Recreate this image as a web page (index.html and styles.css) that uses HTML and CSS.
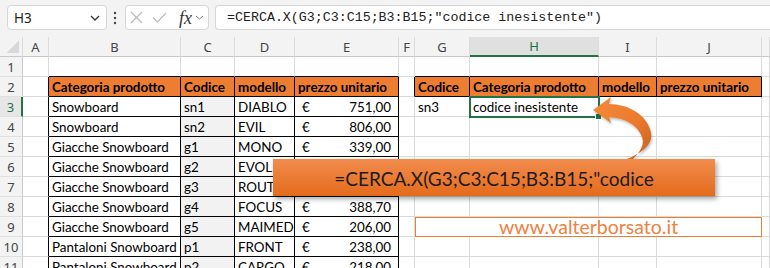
FILE: index.html
```html
<!DOCTYPE html>
<html lang="it">
<head>
  <meta charset="UTF-8">
  <title>CERCA.X - codice inesistente</title>
  <link rel="stylesheet" href="styles.css">
</head>
<body>
  <div class="bar">
    <div class="namebox">
      <span>H3</span>
      <svg width="10" height="6" viewBox="0 0 10 6"><path d="M1 1l4 4 4-4" fill="none" stroke="#333" stroke-width="1.3"/></svg>
    </div>
    <svg class="dots" width="4" height="14" viewBox="0 0 4 14"><circle cx="2" cy="2" r="1.2"/><circle cx="2" cy="7" r="1.2"/><circle cx="2" cy="12" r="1.2"/></svg>
    <div class="fxbox">
      <svg width="13" height="13" viewBox="0 0 13 13"><path d="M1 1l11 11M12 1L1 12" stroke="#b9b9b9" stroke-width="1.1"/></svg>
      <svg width="15" height="11" viewBox="0 0 15 11"><path d="M1 5.5l4.5 4.5L14 1" fill="none" stroke="#b9b9b9" stroke-width="1.1"/></svg>
      <span class="fx">fx</span>
      <svg width="9" height="5" viewBox="0 0 9 5"><path d="M1 1l3.5 3 3.5-3" fill="none" stroke="#888" stroke-width="1"/></svg>
    </div>
    <div class="formula">=CERCA.X(G3;C3:C15;B3:B15;"codice inesistente")</div>
  </div>

  <div class="sheet">
    <table class="grid">
      <colgroup>
        <col class="w-rn"><col class="w-a"><col class="w-b"><col class="w-c"><col class="w-d"><col class="w-e">
        <col class="w-f"><col class="w-g"><col class="w-h"><col class="w-i"><col class="w-j"><col class="w-k">
      </colgroup>
      <tr class="colhead">
        <th class="corner"><div class="tri"></div></th>
        <th>A</th><th>B</th><th>C</th><th>D</th><th>E</th><th>F</th><th>G</th><th class="on">H</th><th>I</th><th>J</th><th></th>
      </tr>
      <tr>
        <td class="rn">1</td><td></td><td class="kb"></td><td class="kb"></td><td class="kb"></td><td class="kb"></td>
        <td></td><td class="kb"></td><td class="kb"></td><td class="kb"></td><td class="kb"></td><td></td>
      </tr>
      <tr>
        <td class="rn">2</td><td class="kr"></td>
        <td class="k hd">Categoria prodotto</td><td class="k hd">Codice</td><td class="k hd">modello</td><td class="k hd">prezzo unitario</td>
        <td class="kr"></td>
        <td class="k hd">Codice</td><td class="k hd">Categoria prodotto</td><td class="k hd">modello</td><td class="k hd">prezzo unitario</td><td></td>
      </tr>
      <tr>
        <td class="rn on">3</td><td class="kr"></td>
        <td class="k">Snowboard</td><td class="k c">sn1</td><td class="k">DIABLO</td>
        <td class="k"><div class="money"><span>€</span><span>751,00</span></div></td>
        <td></td><td>sn3</td><td class="sel">codice inesistente</td><td></td><td></td><td></td>
      </tr>
      <tr>
        <td class="rn">4</td><td class="kr"></td>
        <td class="k">Snowboard</td><td class="k c">sn2</td><td class="k">EVIL</td>
        <td class="k"><div class="money"><span>€</span><span>806,00</span></div></td>
        <td></td><td></td><td></td><td></td><td></td><td></td>
      </tr>
      <tr>
        <td class="rn">5</td><td class="kr"></td>
        <td class="k">Giacche Snowboard</td><td class="k c">g1</td><td class="k">MONO</td>
        <td class="k"><div class="money"><span>€</span><span>339,00</span></div></td>
        <td></td><td></td><td></td><td></td><td></td><td></td>
      </tr>
      <tr>
        <td class="rn">6</td><td class="kr"></td>
        <td class="k">Giacche Snowboard</td><td class="k c">g2</td><td class="k">EVOL</td>
        <td class="k"><div class="money"><span>€</span><span>299,00</span></div></td>
        <td></td><td></td><td></td><td></td><td></td><td></td>
      </tr>
      <tr>
        <td class="rn">7</td><td class="kr"></td>
        <td class="k">Giacche Snowboard</td><td class="k c">g3</td><td class="k">ROUTE</td>
        <td class="k"><div class="money"><span>€</span><span>312,00</span></div></td>
        <td></td><td></td><td></td><td></td><td></td><td></td>
      </tr>
      <tr>
        <td class="rn">8</td><td class="kr"></td>
        <td class="k">Giacche Snowboard</td><td class="k c">g4</td><td class="k">FOCUS</td>
        <td class="k"><div class="money"><span>€</span><span>388,70</span></div></td>
        <td></td><td></td><td></td><td></td><td></td><td></td>
      </tr>
      <tr>
        <td class="rn">9</td><td class="kr"></td>
        <td class="k">Giacche Snowboard</td><td class="k c">g5</td><td class="k">MAIMED</td>
        <td class="k"><div class="money"><span>€</span><span>206,00</span></div></td>
        <td></td><td class="site" colspan="4">www.valterborsato.it</td><td></td>
      </tr>
      <tr>
        <td class="rn">10</td><td class="kr"></td>
        <td class="k">Pantaloni Snowboard</td><td class="k c">p1</td><td class="k">FRONT</td>
        <td class="k"><div class="money"><span>€</span><span>238,00</span></div></td>
        <td></td><td></td><td></td><td></td><td></td><td></td>
      </tr>
      <tr>
        <td class="rn">11</td><td class="kr"></td>
        <td class="k">Pantaloni Snowboard</td><td class="k c">p2</td><td class="k">CARGO</td>
        <td class="k"><div class="money"><span>€</span><span>218,00</span></div></td>
        <td></td><td></td><td></td><td></td><td></td><td></td>
      </tr>
    </table>

    <!-- curved arrow from the callout to H3 -->
    <svg class="arrow" width="70" height="70" viewBox="588 58 70 70">
      <defs>
        <linearGradient id="arr" x1="0" y1="0" x2="1" y2="1">
          <stop offset="0" stop-color="#f58a3c"/>
          <stop offset="0.55" stop-color="#ec7a2c"/>
          <stop offset="1" stop-color="#c45f1d"/>
        </linearGradient>
      </defs>
      <path d="M593 73L611 60L609 67C628 67 648 78 651 96C653 109 640 118 617 126L629 126C640 116 645 108 642 100C638 88 625 81 609 80L611 86Z" fill="url(#arr)"/>
    </svg>

    <div class="callout">=CERCA.X(G3;C3:C15;B3:B15;"codice</div>
  </div>
</body>
</html>
```

FILE: styles.css
```css
body {
  margin: 0;
  width: 770px;
  height: 268px;
  overflow: hidden;
  background: #fff;
  font-family: Lato, "Liberation Sans", sans-serif;
  color: #000;
}

/* formula bar */
.bar {
  display: flex;
  align-items: flex-start;
  height: 37px;
  padding: 5px 0 0 7px;
  box-sizing: border-box;
  background: #f3f3f3;
}

.namebox, .fxbox, .formula {
  height: 25px;
  box-sizing: border-box;
  background: #fff;
  border: 1px solid #d6d6d6;
  border-radius: 4px;
  display: flex;
  align-items: center;
}

.namebox {
  width: 100px;
  padding: 0 6px 0 6px;
  justify-content: space-between;
  font-family: "Noto Sans", sans-serif;
  font-size: 13.5px;
  color: #222;
}

.dots {
  margin: 6px 8px 0 6px;
  fill: #444;
}

.fxbox {
  width: 84px;
  padding: 0 4px 0 4px;
  gap: 9px;
}

.fxbox .fx {
  font-family: "Liberation Serif", serif;
  font-style: italic;
  font-size: 18px;
  color: #333;
  margin-left: 3px;
  margin-right: -6px;
  line-height: 1;
}

.formula {
  flex: 1;
  margin-left: 6px;
  border-right: none;
  border-radius: 4px 0 0 4px;
  padding-left: 11px;
  font-family: "Liberation Mono", monospace;
  font-size: 13.3px;
  color: #222;
}

/* sheet */
.sheet {
  position: relative;
}

.grid {
  border-collapse: separate;
  border-spacing: 0;
  table-layout: fixed;
  width: 770px;
  font-size: 13.4px;
}

.w-rn { width: 23px; }
.w-a { width: 26px; }
.w-b { width: 132px; }
.w-c { width: 54px; }
.w-d { width: 60px; }
.w-e { width: 104px; }
.w-f { width: 16px; }
.w-g { width: 55px; }
.w-h { width: 129px; }
.w-i { width: 58px; }
.w-j { width: 105px; }
.w-k { width: 8px; }

.grid tr {
  height: 20px;
}

.grid td {
  height: 20px;
  box-sizing: border-box;
  padding: 1px 3px 0 3px;
  border-right: 1px solid #dadada;
  border-bottom: 1px solid #dadada;
  white-space: nowrap;
  overflow: hidden;
  line-height: 18px;
}

.colhead th {
  height: 20px;
  box-sizing: border-box;
  padding: 0;
  background: #f3f3f3;
  border-right: 1px solid #dcdcdc;
  border-bottom: 1px solid #c9c9c9;
  font-family: "Noto Sans", sans-serif;
  font-weight: normal;
  font-size: 13px;
  color: #444;
}

.colhead th.on {
  background: #e0e0e0;
  color: #217346;
  border-bottom: 2px solid #217346;
}

.corner {
  position: relative;
}

.tri {
  position: absolute;
  right: 3px;
  bottom: 3px;
  width: 12px;
  height: 12px;
  background: linear-gradient(to bottom right, transparent 50%, #d8d8d8 50%);
}

.grid td.rn {
  padding: 0;
  text-align: center;
  background: #f3f3f3;
  border-right: 1px solid #c9c9c9;
  border-bottom: 1px solid #e0e0e0;
  font-family: "Noto Sans", sans-serif;
  font-size: 13px;
  color: #444;
}

.grid td.rn.on {
  color: #217346;
  background: #e6e6e6;
  border-right: 2px solid #217346;
}

.grid td.k {
  border-right-color: #000;
  border-bottom-color: #000;
}

.grid td.kr {
  border-right-color: #000;
}

.grid td.kb {
  border-bottom-color: #000;
}

.grid td.hd {
  background: #ed7d31;
  font-weight: bold;
}

.grid td.c {
  background: #f2f2f2;
}

.money {
  display: flex;
  justify-content: space-between;
  padding: 0 4px;
}

.grid td.sel {
  position: relative;
  overflow: visible;
  outline: 2px solid #217346;
  outline-offset: -1px;
}

.grid td.sel::after {
  content: "";
  position: absolute;
  right: -4px;
  bottom: -4px;
  width: 5px;
  height: 5px;
  background: #217346;
  border: 1px solid #fff;
}

.grid td.site {
  border: 1px solid #ed7d31;
  padding-top: 0;
  text-align: center;
  color: #ef8240;
  font-size: 19.5px;
  line-height: 18px;
}

/* overlays */
.arrow {
  position: absolute;
  left: 588px;
  top: 58px;
  filter: drop-shadow(1px 2px 1px rgba(0, 0, 0, 0.25));
}

.callout {
  position: absolute;
  left: 273px;
  top: 122px;
  width: 442px;
  height: 37px;
  background: linear-gradient(#f28c4e, #e46b1b);
  box-shadow: 2px 3px 5px rgba(0, 0, 0, 0.35);
  text-align: center;
  line-height: 39px;
  font-size: 19px;
  color: #1c1c1c;
}
```
